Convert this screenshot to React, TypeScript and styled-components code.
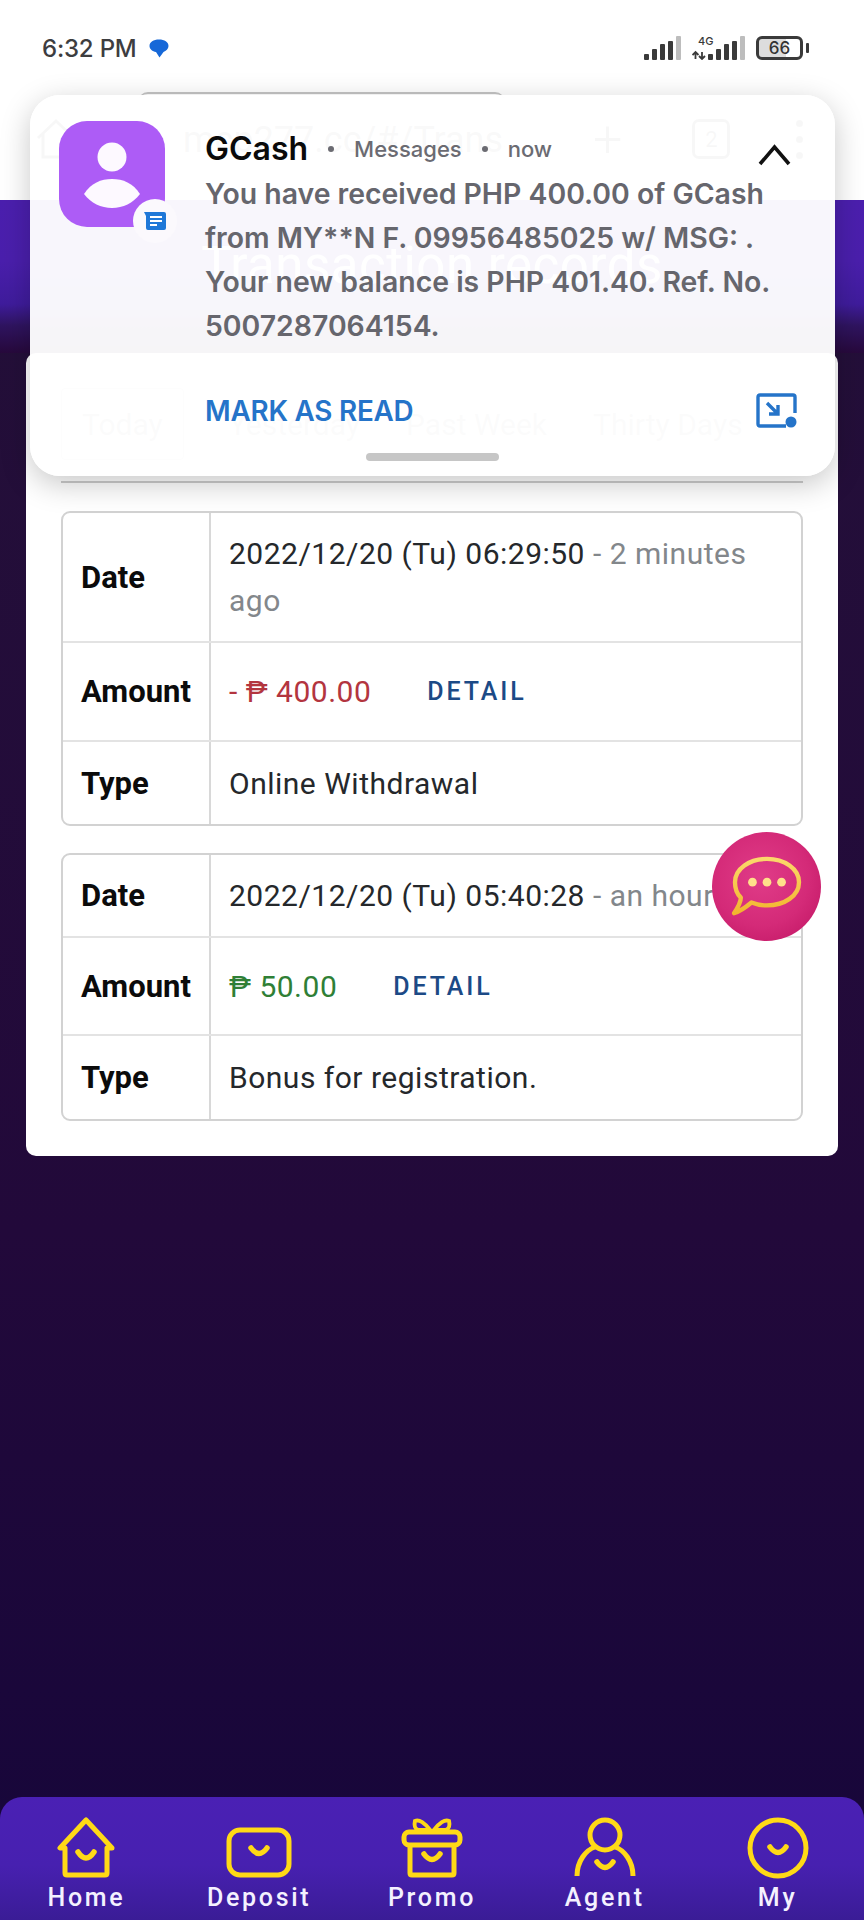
import React from 'react';
import styled, { createGlobalStyle } from 'styled-components';

const GlobalStyle = createGlobalStyle`
  html, body {
    margin: 0;
    padding: 0;
    background: #fff;
  }
  * {
    box-sizing: border-box;
  }
`;

const Page = styled.div`
  position: relative;
  width: 864px;
  height: 1920px;
  overflow: hidden;
  display: flex;
  flex-direction: column;
  font-family: Roboto, 'Liberation Sans', sans-serif;
  background: #fff;
`;

const StatusBar = styled.div`
  height: 84px;
  padding: 12px 61px 0 42px;
  display: flex;
  align-items: center;
  justify-content: space-between;
`;

const Clock = styled.div`
  display: flex;
  align-items: center;
  gap: 12px;
  font: 500 24px Inter, sans-serif;
  letter-spacing: -0.2px;
  color: #3d3d3f;
`;

const StatusIcons = styled.div`
  display: flex;
  align-items: center;
  gap: 10px;
`;

const Battery = styled.div`
  position: relative;
  width: 47px;
  height: 24px;
  border: 3px solid #3a3a3a;
  border-radius: 6px;
  display: flex;
  align-items: center;
  justify-content: center;
  font: 500 17px Inter, sans-serif;
  color: #333;
  background: linear-gradient(90deg, #ddd 66%, #fff 66%);

  &::after {
    content: '';
    position: absolute;
    right: -9px;
    top: 4px;
    width: 3px;
    height: 10px;
    border-radius: 1px;
    background: #3a3a3a;
  }
`;

const BrowserBar = styled.div`
  height: 116px;
  padding: 0 0 6px 36px;
  display: flex;
  align-items: center;
  color: #444;
`;

const UrlPill = styled.div`
  margin-left: 62px;
  width: 367px;
  height: 94px;
  padding-left: 45px;
  display: flex;
  align-items: center;
  overflow: hidden;
  border-top: 2px solid #c4c4c4;
  border-radius: 10px;
  font-size: 36px;
  white-space: nowrap;
  color: #666;
`;

const PlusMark = styled.div`
  margin-left: 88px;
  font-size: 52px;
  font-weight: 300;
`;

const TabCount = styled.div`
  margin-left: 70px;
  width: 38px;
  height: 40px;
  border: 3px solid #444;
  border-radius: 7px;
  font-size: 22px;
  display: flex;
  align-items: center;
  justify-content: center;
`;

const MoreMark = styled.div`
  margin-left: 66px;
  display: flex;
  flex-direction: column;
  gap: 9px;

  i {
    width: 7px;
    height: 7px;
    border-radius: 50%;
    background: #444;
  }
`;

const Main = styled.div`
  flex: 1;
  display: flex;
  flex-direction: column;
  background: linear-gradient(180deg, #241039 0%, #22093a 60%, #16063a 100%);
`;

const Hero = styled.div`
  height: 153px;
  padding-top: 36px;
  text-align: center;
  font-size: 51px;
  letter-spacing: 0.5px;
  color: #fff;
  background: linear-gradient(
    180deg,
    #4b1fae 0%,
    #4a1fac 40%,
    #3f1c9c 68%,
    #2f1460 82%,
    #27093c 100%
  );
`;

const Card = styled.div`
  margin: 0 26px;
  padding: 35px 35px 35px;
  background: #fff;
  border-radius: 10px;
`;

const Tabs = styled.div`
  height: 95px;
  border-bottom: 2px solid #ccc;
  display: flex;
  gap: 44px;
  font-size: 30px;
  color: #999;
`;

const Tab = styled.div<{ $active?: boolean }>`
  height: 72px;
  padding: 0 ${(p) => (p.$active ? '20px' : '0')};
  display: flex;
  align-items: center;
  border: ${(p) => (p.$active ? '1px solid #bbb' : '1px solid transparent')};
  border-radius: 4px;
`;

const Table = styled.div`
  margin-top: 28px;
  border: 2px solid #d2d2d2;
  border-radius: 9px;
  overflow: hidden;

  & + & {
    margin-top: 27px;
  }
`;

const Row = styled.div<{ $height: number }>`
  height: ${(p) => p.$height}px;
  display: grid;
  grid-template-columns: 148px 1fr;
  border-bottom: 2px solid #e3e3e3;

  &:last-child {
    border-bottom: 0;
  }
`;

const Label = styled.div`
  padding-left: 18px;
  display: flex;
  align-items: center;
  border-right: 2px solid #d8d8d8;
  font-size: 31px;
  font-weight: 700;
  color: #0b0b0b;
`;

const Value = styled.div`
  padding: 0 18px;
  display: flex;
  align-items: center;
  font-size: 30px;
  line-height: 47px;
  letter-spacing: 0.5px;
  color: #25282b;
`;

const DateText = styled.div``;

const Muted = styled.span`
  color: #83878b;
`;

const Money = styled.span<{ $tone: 'loss' | 'gain' }>`
  color: ${(p) => (p.$tone === 'loss' ? '#b3353f' : '#2f7f36')};
`;

const DetailLink = styled.span`
  margin-left: 56px;
  font-size: 25px;
  font-weight: 500;
  letter-spacing: 2.9px;
  color: #1c4a86;
`;

const BottomNav = styled.nav`
  margin-top: auto;
  height: 123px;
  padding-top: 20px;
  display: flex;
  border-radius: 22px 22px 0 0;
  background: linear-gradient(180deg, #4a20b4 0%, #4720b0 55%, #3a1c96 100%);
`;

const NavItem = styled.div`
  flex: 1;
  display: flex;
  flex-direction: column;
  align-items: center;
  color: #f4f1ff;
  font-size: 25px;
  font-weight: 500;
  letter-spacing: 2.7px;
  line-height: 32px;

  svg {
    display: block;
    margin-bottom: 3px;
  }
`;

const Notification = styled.div`
  position: absolute;
  left: 30px;
  top: 95px;
  width: 805px;
  height: 381px;
  border-radius: 30px;
  background: rgba(255, 255, 255, 0.962);
  box-shadow: 0 8px 30px rgba(0, 0, 0, 0.22);
`;

const AppIcon = styled.div`
  position: absolute;
  left: 29px;
  top: 26px;
  width: 106px;
  height: 106px;
  border-radius: 28px;
  background: #ad5cf6;
`;

const AppBadge = styled.div`
  position: absolute;
  right: -12px;
  bottom: -16px;
  width: 44px;
  height: 44px;
  border-radius: 50%;
  background: #fbf9fd;
  display: flex;
  align-items: center;
  justify-content: center;
`;

const NotificationBody = styled.div`
  position: absolute;
  left: 175px;
  top: 30px;
  width: 610px;
`;

const NotificationHead = styled.div`
  height: 47px;
  display: flex;
  align-items: center;
  font: 500 22px Inter, sans-serif;
  color: #6b6b72;
`;

const AppName = styled.span`
  font-size: 32px;
  font-weight: 600;
  color: #0a0a0a;
`;

const Dot = styled.span`
  width: 6px;
  height: 6px;
  margin: 0 20px;
  border-radius: 50%;
  background: #6b6b72;
`;

const Message = styled.div`
  font: 600 28.4px/44px Inter, sans-serif;
  white-space: nowrap;
  color: #66666d;
`;

const Collapse = styled.svg`
  position: absolute;
  right: 44px;
  top: 49px;
`;

const ActionRow = styled.div`
  position: absolute;
  left: 175px;
  right: 38px;
  top: 298px;
  display: flex;
  align-items: center;
  justify-content: space-between;
`;

const MarkRead = styled.div`
  font: 600 27.8px Inter, sans-serif;
  letter-spacing: -0.2px;
  color: #2574c9;
`;

const Handle = styled.div`
  position: absolute;
  left: 336px;
  bottom: 15px;
  width: 133px;
  height: 8px;
  border-radius: 4px;
  background: #c6c6c6;
`;

const ChatBubble = styled.div`
  position: absolute;
  left: 712px;
  top: 832px;
  width: 109px;
  height: 109px;
  border-radius: 50%;
  display: flex;
  align-items: center;
  justify-content: center;
  background: radial-gradient(circle at 45% 42%, #e03c88 0%, #d42a78 55%, #bd1260 100%);
`;

const yellow = '#ffd916';

const HomeIcon = () => (
  <svg width="60" height="62" viewBox="0 0 60 62" fill="none" stroke={yellow} strokeWidth="5" strokeLinejoin="round">
    <path d="M30 3 L4 31 L9 31 L9 56 Q9 58 11 58 L49 58 Q51 58 51 56 L51 31 L56 31 Z" />
    <path d="M22 35 Q30 47 38 35" strokeWidth="5.5" strokeLinecap="round" />
  </svg>
);

const DepositIcon = () => (
  <svg width="66" height="62" viewBox="0 0 66 62" fill="none" stroke={yellow} strokeWidth="5">
    <rect x="3" y="13" width="60" height="45" rx="11" />
    <path d="M25 31 Q33 42 41 31" strokeWidth="5.5" strokeLinecap="round" />
  </svg>
);

const PromoIcon = () => (
  <svg width="62" height="62" viewBox="0 0 62 62" fill="none" stroke={yellow} strokeWidth="5">
    <path d="M29 13 C24 6 18 2 14 4 C13 8 14 12 17 13 Z M33 13 C38 6 44 2 48 4 C49 8 48 12 45 13 Z" strokeWidth="4" />
    <rect x="3" y="15" width="56" height="13" rx="5" />
    <path d="M9 28 L9 56 Q9 58 11 58 L51 58 Q53 58 53 56 L53 28" />
    <path d="M23 37 Q31 48 39 37" strokeWidth="5.5" strokeLinecap="round" />
  </svg>
);

const AgentIcon = () => (
  <svg width="62" height="62" viewBox="0 0 62 62" fill="none" stroke={yellow} strokeWidth="5">
    <circle cx="31" cy="18" r="15" />
    <path d="M3 59 C3 44 12 33 21 30 M59 59 C59 44 50 33 41 30" />
    <path d="M23 45 Q31 56 39 45" strokeWidth="5.5" strokeLinecap="round" />
  </svg>
);

const MyIcon = () => (
  <svg width="62" height="62" viewBox="0 0 62 62" fill="none" stroke={yellow} strokeWidth="5">
    <circle cx="31" cy="31" r="28" />
    <path d="M23 30 Q31 41 39 30" strokeWidth="5.5" strokeLinecap="round" />
  </svg>
);

const navItems = [
  { label: 'Home', icon: <HomeIcon /> },
  { label: 'Deposit', icon: <DepositIcon /> },
  { label: 'Promo', icon: <PromoIcon /> },
  { label: 'Agent', icon: <AgentIcon /> },
  { label: 'My', icon: <MyIcon /> },
];

const SignalBars = ({ x = 0 }: { x?: number }) => (
  <g transform={`translate(${x} 0)`}>
    <rect x="0" y="18" width="5" height="6" rx="1" fill="#3a3a3a" />
    <rect x="8" y="13" width="5" height="11" rx="1" fill="#3a3a3a" />
    <rect x="16" y="8" width="5" height="16" rx="1" fill="#3a3a3a" />
    <rect x="24" y="5" width="5" height="19" rx="1" fill="#3a3a3a" />
    <rect x="32" y="0" width="5" height="24" rx="1" fill="#bdbdbd" />
  </g>
);

const App = () => {
  return (
    <Page>
      <GlobalStyle />
      <StatusBar>
        <Clock>
          6:32 PM
          <svg width="20" height="19" viewBox="0 0 20 19">
            <path d="M10 0.5 C15.5 0.5 19.5 3 19.5 7 C19.5 10 17 12 14.5 13 L10.5 18.5 L7 13 C3.5 12.5 0.5 10 0.5 7 C0.5 3 4.5 0.5 10 0.5 Z" fill="#1668d8" />
          </svg>
        </Clock>
        <StatusIcons>
          <svg width="38" height="24" viewBox="0 0 38 24">
            <SignalBars />
          </svg>
          <svg width="54" height="24" viewBox="0 0 54 24">
            <path d="M3.5 23 L3.5 16 M0.5 19 L3.5 16 L6.5 19 M10 16 L10 23 M7 20 L10 23 L13 20" stroke="#3a3a3a" strokeWidth="1.8" fill="none" />
            <text x="6" y="9" fontSize="11" fontFamily="Inter, sans-serif" fontWeight="500" fill="#3a3a3a">4G</text>
            <SignalBars x={16} />
          </svg>
          <Battery>66</Battery>
        </StatusIcons>
      </StatusBar>

      <BrowserBar>
        <svg width="40" height="42" viewBox="0 0 40 42" fill="none" stroke="#444" strokeWidth="3">
          <path d="M2 20 L20 3 L38 20 M7 16 L7 39 L33 39 L33 16" />
        </svg>
        <UrlPill>mcp277.cc/#/Transa</UrlPill>
        <PlusMark>+</PlusMark>
        <TabCount>2</TabCount>
        <MoreMark>
          <i />
          <i />
          <i />
        </MoreMark>
      </BrowserBar>

      <Main>
        <Hero>Transaction records</Hero>
        <Card>
          <Tabs>
            <Tab $active>Today</Tab>
            <Tab>Yesterday</Tab>
            <Tab>Past Week</Tab>
            <Tab>Thirty Days</Tab>
          </Tabs>

          <Table>
            <Row $height={130}>
              <Label>Date</Label>
              <Value>
                <DateText>
                  2022/12/20 (Tu) 06:29:50 <Muted>- 2 minutes ago</Muted>
                </DateText>
              </Value>
            </Row>
            <Row $height={99}>
              <Label>Amount</Label>
              <Value>
                <Money $tone="loss">- ₱ 400.00</Money>
                <DetailLink>DETAIL</DetailLink>
              </Value>
            </Row>
            <Row $height={82}>
              <Label>Type</Label>
              <Value>Online Withdrawal</Value>
            </Row>
          </Table>

          <Table>
            <Row $height={83}>
              <Label>Date</Label>
              <Value>
                <DateText>
                  2022/12/20 (Tu) 05:40:28 <Muted>- an hour ago</Muted>
                </DateText>
              </Value>
            </Row>
            <Row $height={98}>
              <Label>Amount</Label>
              <Value>
                <Money $tone="gain">₱ 50.00</Money>
                <DetailLink>DETAIL</DetailLink>
              </Value>
            </Row>
            <Row $height={83}>
              <Label>Type</Label>
              <Value>Bonus for registration.</Value>
            </Row>
          </Table>
        </Card>

        <BottomNav>
          {navItems.map((item) => (
            <NavItem key={item.label}>
              {item.icon}
              {item.label}
            </NavItem>
          ))}
        </BottomNav>
      </Main>

      <ChatBubble>
        <svg width="72" height="64" viewBox="0 0 74 66" fill="none">
          <defs>
            <linearGradient id="bubbleStroke" x1="0" y1="0" x2="0" y2="1">
              <stop offset="0%" stopColor="#fbd86a" />
              <stop offset="100%" stopColor="#f2b52e" />
            </linearGradient>
          </defs>
          <path
            d="M37 4 C55 4 70 14 70 28 C70 42 55 52 37 52 C31 52 26 51 21 49 C15 54 10 58 3 60 C7 54 10 49 10 44 C6 40 4 34 4 28 C4 14 19 4 37 4 Z"
            stroke="url(#bubbleStroke)"
            strokeWidth="4.5"
            strokeLinejoin="round"
          />
          <circle cx="22" cy="28" r="4.5" fill="#ffe08a" />
          <circle cx="37" cy="28" r="4.5" fill="#ffe08a" />
          <circle cx="52" cy="28" r="4.5" fill="#ffe08a" />
        </svg>
      </ChatBubble>

      <Notification>
        <AppIcon>
          <svg width="106" height="106" viewBox="0 0 106 106" fill="#fdf9ff">
            <circle cx="53" cy="36" r="14.5" />
            <path d="M25 73 C32 62 42 58 53 58 C64 58 74 62 81 73 C74 82 64 87 53 87 C42 87 32 82 25 73 Z" />
          </svg>
          <AppBadge>
            <svg width="22" height="20" viewBox="0 0 22 20">
              <path d="M0 1 L20 1 Q22 1 22 3 L22 17 Q22 19 20 19 L4 19 Q2 19 2 17 L2 5 Z" fill="#1f78d8" />
              <path d="M6 6 L18 6 M6 10 L18 10 M6 14 L13 14" stroke="#fff" strokeWidth="2" />
            </svg>
          </AppBadge>
        </AppIcon>

        <NotificationBody>
          <NotificationHead>
            <AppName>GCash</AppName>
            <Dot />
            Messages
            <Dot />
            now
          </NotificationHead>
          <Message>
            You have received PHP 400.00 of GCash
            <br />
            from MY**N F. 09956485025 w/ MSG: .
            <br />
            Your new balance is PHP 401.40. Ref. No.
            <br />
            5007287064154.
          </Message>
        </NotificationBody>

        <Collapse width="33" height="22" viewBox="0 0 33 22" fill="none" stroke="#111" strokeWidth="3.6">
          <path d="M2 20 L16.5 3 L31 20" />
        </Collapse>

        <ActionRow>
          <MarkRead>MARK AS READ</MarkRead>
          <svg width="41" height="35" viewBox="0 0 41 35" fill="none">
            <path d="M30 33 L4 33 Q2 33 2 31 L2 4 Q2 2 4 2 L37 2 Q39 2 39 4 L39 20" stroke="#2574c9" strokeWidth="3.4" />
            <path d="M11 10 L22 21 M22 12 L22 21 L13 21" stroke="#2574c9" strokeWidth="3.4" />
            <circle cx="35" cy="29" r="5.5" fill="#2574c9" />
          </svg>
        </ActionRow>
        <Handle />
      </Notification>
    </Page>
  );
};

export default App;
